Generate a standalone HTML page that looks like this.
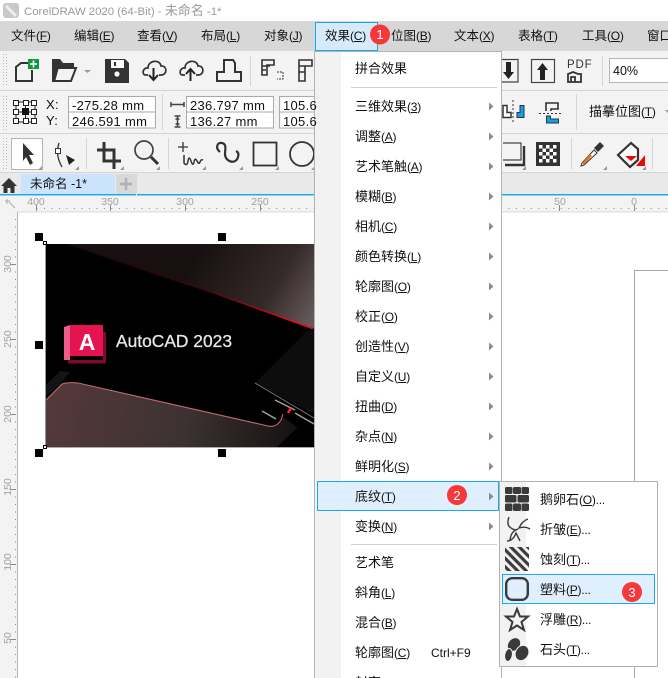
<!DOCTYPE html>
<html lang="zh"><head><meta charset="utf-8"><title>CorelDRAW 2020</title>
<style>
html,body{margin:0;padding:0;background:#fff}
#r{position:relative;width:668px;height:678px;overflow:hidden;background:#fff;font-family:"Liberation Sans","Noto Sans CJK SC",sans-serif;font-size:13px;color:#111}
#r svg.bg{position:absolute;left:0;top:0}
.t{position:absolute;height:20px;line-height:20px;white-space:nowrap}
u{text-decoration:underline;text-underline-offset:1px}
s{text-decoration:none;font-size:12px;letter-spacing:-.25px}
.m{font-size:12.5px}
.i{font-size:13px;letter-spacing:.3px}
</style></head><body><div id="r">
<svg class="bg" width="668" height="678" viewBox="0 0 668 678" font-family="Liberation Sans, Noto Sans CJK SC, sans-serif">
<defs>
<pattern id="tx" width="7.49" height="3" patternUnits="userSpaceOnUse" x="36.5"><rect width="1" height="2" fill="#8a8a8a"/></pattern>
<pattern id="ty" width="3" height="7.5" patternUnits="userSpaceOnUse" y="1.5"><rect width="2" height="1" fill="#8a8a8a"/></pattern>
<pattern id="grip" width="3" height="3" patternUnits="userSpaceOnUse"><rect width="1" height="1" fill="#bbb"/></pattern>
<pattern id="etch" width="6" height="6" patternUnits="userSpaceOnUse" patternTransform="rotate(45)"><rect width="6" height="3.2" fill="#3c3c3c"/></pattern>
<linearGradient id="w" gradientUnits="userSpaceOnUse" x1="200" y1="250" x2="320" y2="320"><stop offset="0" stop-color="#181010"/><stop offset=".6" stop-color="#352a2a"/><stop offset="1" stop-color="#6e6060"/></linearGradient>
<linearGradient id="l" gradientUnits="userSpaceOnUse" x1="46" y1="400" x2="300" y2="447"><stop offset="0" stop-color="#55383a"/><stop offset=".55" stop-color="#3c3232"/><stop offset="1" stop-color="#141010"/></linearGradient>
<linearGradient id="rl" gradientUnits="userSpaceOnUse" x1="70" y1="245" x2="314" y2="329"><stop offset="0" stop-color="#120606"/><stop offset=".55" stop-color="#3a0a0c"/><stop offset=".72" stop-color="#8a0c14"/><stop offset="1" stop-color="#ff1020"/></linearGradient>
</defs>

<!-- chrome -->
<rect x="0" y="21" width="668" height="30" fill="#d7d7d7"/>
<rect x="0" y="51" width="668" height="144" fill="#f3f3f3"/>
<rect x="0" y="90" width="668" height="1" fill="#d5d5d5"/>
<rect x="0" y="133" width="668" height="1" fill="#d5d5d5"/>
<rect x="0" y="173" width="668" height="21" fill="#e9e9e9"/>
<rect x="0" y="172" width="668" height="1" fill="#d5d5d5"/>
<rect x="0" y="194" width="668" height="1.5" fill="#1aa7ee"/>
<rect x="136" y="194" width="1" height="2" fill="#fff"/>
<rect x="0" y="196" width="668" height="16" fill="#f3f3f3"/>
<rect x="0" y="196" width="17" height="482" fill="#f3f3f3"/>
<rect x="17" y="212" width="1" height="466" fill="#b5b5b5"/>
<rect x="17" y="211.500" width="651" height="1" fill="#d8d8d8"/>
<rect x="3" y="54" width="5" height="33" fill="url(#grip)"/>
<rect x="3" y="94" width="5" height="36" fill="url(#grip)"/>
<rect x="3" y="137" width="5" height="33" fill="url(#grip)"/>

<!-- title icon -->
<rect x="3" y="3" width="16" height="15" rx="3" fill="#c9c9c9"/><path d="M6 6l10 10" stroke="#eee" stroke-width="3"/>

<!-- rulers -->
<rect x="37" y="208" width="631" height="2" fill="url(#tx)"/>
<g fill="#8a8a8a">
<rect x="36" y="205" width="1" height="6"/><rect x="110" y="205" width="1" height="6"/><rect x="185" y="205" width="1" height="6"/><rect x="260" y="205" width="1" height="6"/><rect x="559" y="205" width="1" height="6"/><rect x="634" y="205" width="1" height="6"/>
<rect x="10" y="264" width="6" height="1"/><rect x="10" y="339" width="6" height="1"/><rect x="10" y="414" width="6" height="1"/><rect x="10" y="489" width="6" height="1"/><rect x="10" y="564" width="6" height="1"/><rect x="10" y="639" width="6" height="1"/>
</g>
<rect x="14" y="214" width="2" height="464" fill="url(#ty)"/>
<g font-size="10.5" fill="#a2a2a2" text-anchor="middle">
<text x="36" y="205">400</text><text x="110" y="205">350</text><text x="185" y="205">300</text><text x="260" y="205">250</text><text x="560" y="205">50</text><text x="634" y="205">0</text>
<text transform="translate(11,264) rotate(-90)">300</text>
<text transform="translate(11,339) rotate(-90)">250</text>
<text transform="translate(11,414) rotate(-90)">200</text>
<text transform="translate(11,487) rotate(-90)">150</text>
<text transform="translate(11,562) rotate(-90)">100</text>
<text transform="translate(11,638) rotate(-90)">50</text>
</g>
<path d="M5 201h5M7 199v5M9 202l6 6" stroke="#aaa" stroke-width="1" fill="none"/>

<!-- page edge right -->
<path d="M668 270.500H634.500V678" stroke="#a8a8a8" fill="none"/>

<!-- bitmap -->
<rect x="45" y="244" width="269" height="203" fill="#000"/>
<rect x="45" y="447" width="269" height="1" fill="#aaa"/><rect x="45" y="244" width="1" height="203" fill="#999"/>
<polygon points="67,244 314,244 314,328" fill="url(#w)"/>
<path d="M70 245L217 294L314 329" stroke="url(#rl)" stroke-width="1.600" fill="none"/>
<polygon points="255,383 306,332 314,328 314,414" fill="#0d0d0d"/>
<polygon points="46,400 62,384 76,383 268,426 276,426 283,417 314,440 314,447 277,447 46,447" fill="url(#l)"/>
<polygon points="277,447 314,412 314,447" fill="#000"/>
<path d="M46 400L62 384Q68 382 78 383L268 426Q276 428 281 420L283 414" stroke="#c56a72" stroke-width="1.100" fill="none"/>
<path d="M46 385L60 371L70 372L60 384L46 396Z" fill="#141414"/>
<path d="M255 383L314 418" stroke="#7a7a7a" stroke-width="1"/>
<path d="M262 411l14 8M275 400l20 10M295 413l19 11" stroke="#a8a0a0" stroke-width="1.400"/>
<path d="M288 413l3-5" stroke="#ff2030" stroke-width="2.500"/>
<polygon points="64,327 70,325 70,360 64,360" fill="#ee5d8a"/>
<polygon points="68,360 103,360 103,332 106,332 106,363.500 68,363.500" fill="#7a0a2e"/>
<polygon points="70,325 103,325 103,356 70,356" fill="#e5134f"/>
<text x="87" y="350" font-size="23" font-weight="bold" fill="#fff" text-anchor="middle">A</text>
<text x="116" y="347" font-size="17.500" fill="#e6e6e6" stroke="#e6e6e6" stroke-width=".3" textLength="116" lengthAdjust="spacingAndGlyphs">AutoCAD 2023</text>
<!-- handles -->
<g fill="#000"><rect x="35" y="233" width="8" height="8"/><rect x="218" y="233" width="8" height="8"/><rect x="35" y="341" width="8" height="8"/><rect x="35" y="449" width="8" height="8"/><rect x="218" y="449" width="8" height="8"/></g>
<g fill="#fff" stroke="#000"><rect x="43.500" y="241.500" width="3" height="3"/><rect x="43.500" y="445.500" width="3" height="3"/></g>

<!-- toolbar row 1 -->
<g fill="none" stroke="#333" stroke-width="2">
<path d="M32 70V81H16V67L21 63H28"/>
<path d="M148 75H146C141 75 143 67 148 68C148 60 160 59 161 66C167 65 168 75 161 75H159" stroke-width="1.700"/>
<path d="M185 75H183C178 75 180 67 185 68C185 60 197 59 198 66C204 65 205 75 198 75H196" stroke-width="1.700"/>
<path d="M217 72H224V60H233L235 63V72H241V81H217Z"/>
</g>
<rect x="28" y="59" width="11" height="10" fill="#0a9b42"/><path d="M33.500 60.500v7M30 64h7" stroke="#fff" stroke-width="1.600"/>
<path d="M52 59H60L63 63H74V67H59L55 82H52Z" fill="#333"/><path d="M58 68H76L71 81H54" fill="none" stroke="#333" stroke-width="2"/>
<polygon points="84,70 91,70 87.500,73" fill="#999"/>
<path d="M105 59H125L129 63V83H105Z" fill="#333"/><rect x="111" y="60" width="13" height="8" fill="#fff"/><rect x="114" y="62" width="2" height="4" fill="#333"/><circle cx="117" cy="74" r="2.600" fill="#fff"/>
<path d="M153.500 68V79M149 75l4.500 5 4.500-5" stroke="#222" stroke-width="2" fill="none"/>
<path d="M190.500 81V70M186 74l4.500-5 4.500 5" stroke="#222" stroke-width="2" fill="none"/>
<rect x="250" y="56" width="1" height="30" fill="#d5d5d5"/>
<g fill="none" stroke="#333" stroke-width="1.600"><path d="M262 60H274V65H267V75H262ZM262 66H270M262 70H266"/><path d="M299 60H312V66H305V81H299ZM299 66H305M299 72H305"/></g>
<path d="M277 72h6v7h-6M283 72v3" stroke="#333" fill="none" stroke-dasharray="2 1"/>

<!-- toolbar row 1 right -->
<g fill="none" stroke="#444" stroke-width="1.200"><path d="M500 59.500H518V82H500"/><rect x="531.500" y="59.500" width="23" height="23"/></g>
<path d="M506 62h5v10h3l-5.500 7-5.500-7h3Z" fill="#222"/>
<path d="M540 80h5v-10h3l-5.500-7-5.500 7h3Z" fill="#222"/>
<text x="567" y="68" font-size="11.500" fill="#333" letter-spacing=".8">PDF</text>
<path d="M568 82V74l5-2 5 2h3v8ZM571 82v-5h4v5" fill="none" stroke="#333" stroke-width="1.800"/>
<rect x="602" y="56" width="1" height="30" fill="#d5d5d5"/>
<rect x="609.500" y="58.500" width="70" height="24" fill="#fff" stroke="#b5b5b5"/>

<!-- row 2 -->
<path d="M16 102H35V122H16ZM16 112H35M25.500 102V122" fill="none" stroke="#222"/>
<g fill="#fff" stroke="#222"><rect x="13.500" y="100.500" width="5" height="5"/><rect x="23.500" y="100.500" width="5" height="5"/><rect x="31.500" y="100.500" width="5" height="5"/><rect x="13.500" y="109.500" width="5" height="5"/><rect x="31.500" y="109.500" width="5" height="5"/><rect x="13.500" y="118.500" width="5" height="5"/><rect x="23.500" y="118.500" width="5" height="5"/><rect x="31.500" y="118.500" width="5" height="5"/></g>
<rect x="22" y="108" width="7" height="7" fill="#111"/>
<g fill="#fff" stroke="#aaa"><rect x="68.500" y="96.500" width="87" height="15.500"/><rect x="68.500" y="112" width="87" height="16"/><rect x="186.500" y="96.500" width="87" height="15.500"/><rect x="186.500" y="112" width="87" height="16"/><rect x="279.500" y="96.500" width="50" height="15.500"/><rect x="279.500" y="112" width="50" height="16"/></g>
<rect x="162" y="94" width="1" height="36" fill="#d5d5d5"/>
<path d="M171 104.500h13M171 102v5M184 102v5" stroke="#444" stroke-width="1.500" fill="none"/>
<path d="M177.500 116v11M174.500 116h6M174.500 127h6M175.500 119h4M175.500 124h4" stroke="#444" stroke-width="1.500" fill="none"/>

<!-- row 2 right -->
<path d="M503 105.500h4v7h4v5h-8Z" fill="#fff" stroke="#333" stroke-width="1.500"/>
<path d="M513 100v23" stroke="#333" stroke-dasharray="2 2"/>
<path d="M517 117.500v-5h3v-7h4v12Z" fill="#0ea2e6" stroke="#333" stroke-width="1"/>
<path d="M546 111v-8h12v6h-7v2" fill="none" stroke="#333" stroke-width="1.600"/>
<path d="M539 113.500h24" stroke="#333" stroke-dasharray="2 2"/>
<path d="M546.500 116h4v3h8v4h-12Z" fill="#0ea2e6" stroke="#333"/>
<rect x="576" y="94" width="1" height="36" fill="#d5d5d5"/>
<polygon points="665,110 668,110 668,113" fill="#999"/>

<!-- row 3 tools -->
<rect x="11.500" y="138.500" width="31" height="31" fill="#fff" stroke="#b5b5b5"/>
<path d="M23 143l11 12h-5l4 8-3 2-4-8-3 4Z" fill="#333"/>
<path d="M59 143q-4 12 3 24" fill="none" stroke="#333" stroke-width="1.300"/><rect x="55.500" y="148.500" width="5" height="5" fill="#fff" stroke="#333"/><path d="M66 155l9 5-6 5Z" fill="#222"/>
<rect x="86" y="138" width="1" height="31" fill="#d5d5d5"/>
<path d="M104 142v19h17M97 150h17v19" fill="none" stroke="#333" stroke-width="3"/>
<circle cx="144" cy="150" r="9" fill="none" stroke="#444" stroke-width="1.700"/><path d="M151 157l7 7" stroke="#333" stroke-width="3"/>
<rect x="168" y="138" width="1" height="31" fill="#d5d5d5"/>
<path d="M178 147h10M183 142v10" stroke="#333" stroke-width="1.300"/>
<path d="M184 155v8q3 4 4-2t3 0 3 1 3-1 3 1 3-2" fill="none" stroke="#333" stroke-width="1.500"/>
<path d="M220 152c-5-4-3-10 2-9 5 1 3 7 3 11 0 8 11 11 13 3 1-3 0-5-2-6" fill="none" stroke="#333" stroke-width="2.200"/>
<rect x="253.500" y="142.500" width="23" height="23" fill="none" stroke="#333" stroke-width="1.800"/>
<circle cx="302" cy="154" r="12" fill="none" stroke="#333" stroke-width="1.800"/>
<g fill="#999"><polygon points="42,166 42,170 38,170"/><polygon points="79,166 79,170 75,170"/><polygon points="124,166 124,170 120,170"/><polygon points="160,166 160,170 156,170"/><polygon points="206,166 206,170 202,170"/><polygon points="243,166 243,170 239,170"/><polygon points="279,166 279,170 275,170"/><polygon points="315,166 315,170 311,170"/><polygon points="526,166 526,170 522,170"/><polygon points="607,166 607,170 603,170"/><polygon points="646,166 646,170 642,170"/></g>

<!-- row 3 right -->
<path d="M503 143h18v17h-18" fill="none" stroke="#444" stroke-width="1.200"/><path d="M505 165h19v-19" fill="none" stroke="#333" stroke-width="2.400"/>
<rect x="536" y="142" width="24" height="24" fill="#333"/>
<g fill="#fff"><rect x="539" y="145" width="3.500" height="3.500"/><rect x="546" y="145" width="3.500" height="3.500"/><rect x="553" y="145" width="3.500" height="3.500"/><rect x="542.500" y="148.500" width="3.500" height="3.500"/><rect x="549.500" y="148.500" width="3.500" height="3.500"/><rect x="539" y="152" width="3.500" height="3.500"/><rect x="546" y="152" width="3.500" height="3.500"/><rect x="553" y="152" width="3.500" height="3.500"/><rect x="542.500" y="155.500" width="3.500" height="3.500"/><rect x="549.500" y="155.500" width="3.500" height="3.500"/><rect x="539" y="159" width="3.500" height="3.500"/><rect x="546" y="159" width="3.500" height="3.500"/><rect x="553" y="159" width="3.500" height="3.500"/></g>
<rect x="571" y="138" width="1" height="31" fill="#d5d5d5"/>
<path d="M581 166l1-3 12-13 3 3-13 12Z" fill="#fff" stroke="#333"/><path d="M583 164l8-9" stroke="#e8731c" stroke-width="2.500"/><path d="M594 148l6-6 4 4-6 6Z" fill="#333"/>
<path d="M631 143l-13 12 12 12 8-7v-11Z" fill="#fff" stroke="#333" stroke-width="2.200"/><path d="M625 156h12l-6 5Z" fill="#e60b0b"/><path d="M636 166l9-11v11Z" fill="#e60b0b"/>
<rect x="652" y="138" width="1" height="31" fill="#d5d5d5"/>

<!-- tab bar -->
<path d="M9 178l-8 8h2.500v7h4v-5h3v5h4v-7H17Z" fill="#333"/>
<rect x="21" y="174" width="94" height="20" fill="#cbe3fd"/>
<rect x="116" y="174" width="21" height="20" fill="#d8d8d8"/>
<path d="M126 178v12M120 184h12" stroke="#b0b0b0" stroke-width="2.500"/>

<!-- main menu -->
<rect x="315.500" y="22.500" width="62" height="28" fill="#d6eafa" stroke="#1aa7f0"/>
<rect x="314.500" y="51.500" width="187" height="640" fill="#fff" stroke="#b2b2b2"/>
<rect x="315" y="52" width="26" height="630" fill="#f2f2f2"/>
<rect x="351" y="87" width="146" height="1" fill="#d0d0d0"/>
<rect x="351" y="544" width="146" height="1" fill="#d0d0d0"/>
<rect x="317.500" y="481.500" width="181" height="29" fill="#e0effe" stroke="#18aaf5"/>
<g fill="#8c8c8c">
<polygon points="489,102.500 489,110.500 493.500,106.500"/><polygon points="489,132.500 489,140.500 493.500,136.500"/><polygon points="489,162.500 489,170.500 493.500,166.500"/><polygon points="489,192.500 489,200.500 493.500,196.500"/><polygon points="489,222.500 489,230.500 493.500,226.500"/><polygon points="489,252.500 489,260.500 493.500,256.500"/><polygon points="489,282.500 489,290.500 493.500,286.500"/><polygon points="489,312.500 489,320.500 493.500,316.500"/><polygon points="489,342.500 489,350.500 493.500,346.500"/><polygon points="489,372.500 489,380.500 493.500,376.500"/><polygon points="489,402.500 489,410.500 493.500,406.500"/><polygon points="489,432.500 489,440.500 493.500,436.500"/><polygon points="489,462.500 489,470.500 493.500,466.500"/><polygon points="489,492.500 489,500.500 493.500,496.500"/><polygon points="489,522.500 489,530.500 493.500,526.500"/>
</g>

<!-- submenu -->
<rect x="499.500" y="481.500" width="158" height="185" fill="#fff" stroke="#b2b2b2"/>
<rect x="500" y="482" width="26" height="184" fill="#f2f2f2"/>
<rect x="502.500" y="574.500" width="152" height="29" fill="#e0effe" stroke="#18aaf5"/>
<!-- cobbles -->
<g fill="#3a3a3a"><rect x="505" y="487" width="7.500" height="7" rx="1.500"/><rect x="513" y="487" width="8" height="7" rx="1.500"/><rect x="521.500" y="487" width="7.500" height="7" rx="1.500"/><rect x="505" y="495" width="11.500" height="7.500" rx="1.500"/><rect x="517.500" y="495" width="11.500" height="7.500" rx="1.500"/><rect x="505" y="503.500" width="7.500" height="7.500" rx="1.500"/><rect x="513" y="503.500" width="8" height="7.500" rx="1.500"/><rect x="521.500" y="503.500" width="7.500" height="7.500" rx="1.500"/></g>
<!-- crumple -->
<path d="M509 517q-3 8 2 11 4 3 7 1-7 2-8 11M528 519q-6 2-9 9 6-2 11 1M507 541q6 0 9-8 2 4 4 8" fill="none" stroke="#3a3a3a" stroke-width="1.400"/>
<!-- etch -->
<rect x="505" y="547" width="24" height="24" fill="url(#etch)"/>
<!-- plastic -->
<rect x="506.200" y="578.200" width="21.600" height="21.600" rx="6" fill="none" stroke="#3a3a3a" stroke-width="2.400"/>
<!-- star -->
<polygon points="517,609 520,616.500 528,616.500 521.500,622 524,630 517,625.500 510,630 512.500,622 506,616.500 514,616.500" fill="none" stroke="#3a3a3a" stroke-width="2"/>
<!-- stones -->
<g fill="#3a3a3a" stroke="#f4f4f4" stroke-width="1"><ellipse cx="514" cy="644.500" rx="6" ry="7.500" transform="rotate(40 514 644.500)"/><ellipse cx="508.500" cy="655" rx="3.800" ry="6.500" transform="rotate(10 508.500 655)"/><ellipse cx="522" cy="653" rx="6.500" ry="8" transform="rotate(30 522 653)"/></g>

<!-- badges -->
<g fill="#f5393b"><circle cx="380" cy="34.500" r="10"/><circle cx="457" cy="495" r="10"/><circle cx="632" cy="592" r="10"/></g>
<g fill="#fff" font-size="13" text-anchor="middle"><text x="380" y="39">1</text><text x="457" y="500">2</text><text x="632" y="597">3</text></g>
</svg>

<div class="t" style="left:24px;top:1px;color:#9a9a9a;font-size:11.4px">CorelDRAW 2020 (64-Bit) - <span style="font-size:13px">未命名</span> -1*</div>

<div class="t m" style="left:11px;top:26px">文件<s>(<u>F</u>)</s></div>
<div class="t m" style="left:74px;top:26px">编辑<s>(<u>E</u>)</s></div>
<div class="t m" style="left:137px;top:26px">查看<s>(<u>V</u>)</s></div>
<div class="t m" style="left:201px;top:26px">布局<s>(<u>L</u>)</s></div>
<div class="t m" style="left:264px;top:26px">对象<s>(<u>J</u>)</s></div>
<div class="t m" style="left:325px;top:26px">效果<s>(<u>C</u>)</s></div>
<div class="t m" style="left:391px;top:26px">位图<s>(<u>B</u>)</s></div>
<div class="t m" style="left:454px;top:26px">文本<s>(<u>X</u>)</s></div>
<div class="t m" style="left:518px;top:26px">表格<s>(<u>T</u>)</s></div>
<div class="t m" style="left:582px;top:26px">工具<s>(<u>O</u>)</s></div>
<div class="t m" style="left:647px;top:26px">窗口</div>

<div class="t" style="left:613px;top:61px;font-size:12.5px">40%</div>
<div class="t i" style="left:46px;top:95px">X:</div>
<div class="t i" style="left:46px;top:111px">Y:</div>
<div class="t i" style="left:72px;top:96px">-275.28 mm</div>
<div class="t i" style="left:72px;top:112px">246.591 mm</div>
<div class="t i" style="left:190px;top:96px">236.797 mm</div>
<div class="t i" style="left:190px;top:112px">136.27 mm</div>
<div class="t i" style="left:283px;top:96px">105.6</div>
<div class="t i" style="left:283px;top:112px">105.6</div>
<div class="t" style="left:589px;top:102px">描摹位图<s>(<u>T</u>)</s></div>
<div class="t" style="left:30px;top:174px;font-size:12.5px">未命名 -1*</div>

<div class="t" style="left:355px;top:59px">拼合效果</div>
<div class="t" style="left:355px;top:97px">三维效果<s>(<u>3</u>)</s></div>
<div class="t" style="left:355px;top:127px">调整<s>(<u>A</u>)</s></div>
<div class="t" style="left:355px;top:157px">艺术笔触<s>(<u>A</u>)</s></div>
<div class="t" style="left:355px;top:187px">模糊<s>(<u>B</u>)</s></div>
<div class="t" style="left:355px;top:217px">相机<s>(<u>C</u>)</s></div>
<div class="t" style="left:355px;top:247px">颜色转换<s>(<u>L</u>)</s></div>
<div class="t" style="left:355px;top:277px">轮廓图<s>(<u>O</u>)</s></div>
<div class="t" style="left:355px;top:307px">校正<s>(<u>O</u>)</s></div>
<div class="t" style="left:355px;top:337px">创造性<s>(<u>V</u>)</s></div>
<div class="t" style="left:355px;top:367px">自定义<s>(<u>U</u>)</s></div>
<div class="t" style="left:355px;top:397px">扭曲<s>(<u>D</u>)</s></div>
<div class="t" style="left:355px;top:427px">杂点<s>(<u>N</u>)</s></div>
<div class="t" style="left:355px;top:457px">鲜明化<s>(<u>S</u>)</s></div>
<div class="t" style="left:355px;top:487px">底纹<s>(<u>T</u>)</s></div>
<div class="t" style="left:355px;top:517px">变换<s>(<u>N</u>)</s></div>
<div class="t" style="left:355px;top:553px">艺术笔</div>
<div class="t" style="left:355px;top:583px">斜角<s>(<u>L</u>)</s></div>
<div class="t" style="left:355px;top:613px">混合<s>(<u>B</u>)</s></div>
<div class="t" style="left:355px;top:643px">轮廓图<s>(<u>C</u>)</s></div>
<div class="t" style="left:431px;top:643px;font-size:12px">Ctrl+F9</div>
<div class="t" style="left:355px;top:673px">封套</div>

<div class="t" style="left:540px;top:490px">鹅卵石<s>(<u>O</u>)...</s></div>
<div class="t" style="left:540px;top:520px">折皱<s>(<u>E</u>)...</s></div>
<div class="t" style="left:540px;top:550px">蚀刻<s>(<u>T</u>)...</s></div>
<div class="t" style="left:540px;top:580px">塑料<s>(<u>P</u>)...</s></div>
<div class="t" style="left:540px;top:610px">浮雕<s>(<u>R</u>)...</s></div>
<div class="t" style="left:540px;top:640px">石头<s>(<u>T</u>)...</s></div>
</div></body></html>
